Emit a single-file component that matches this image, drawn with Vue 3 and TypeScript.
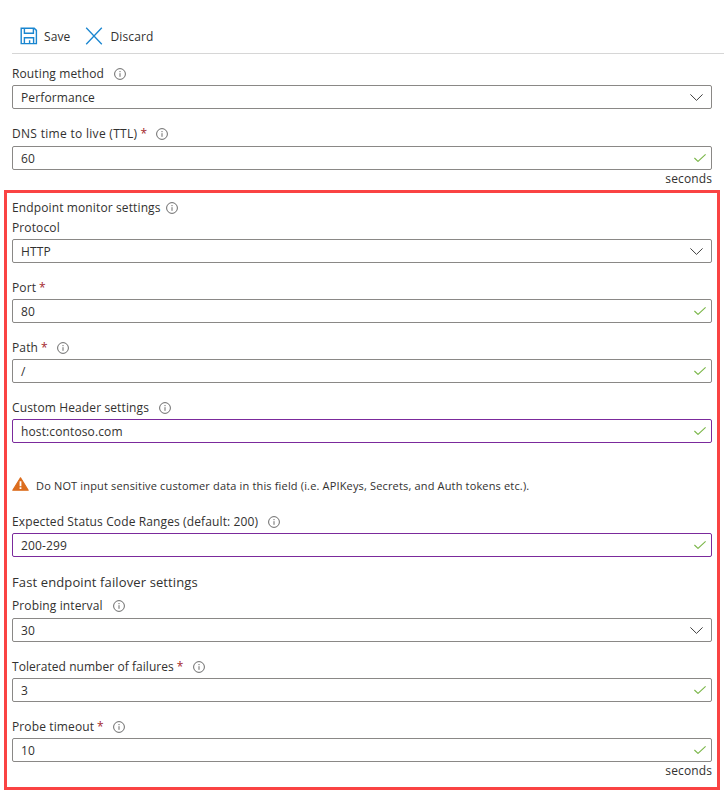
<script setup lang="ts">
type Field = {
  label: string
  value: string
  kind: 'select' | 'text'
  required?: boolean
  info?: boolean
  accent?: boolean
  suffix?: boolean
  labelClass?: string
}

const routing: Field[] = [
  { label: 'Routing method', value: 'Performance', kind: 'select', info: true },
  { label: 'DNS time to live (TTL)', value: '60', kind: 'text', required: true, info: true, suffix: true, labelClass: 'wide' },
]
const monitor: Field[] = [
  { label: 'Port', value: '80', kind: 'text', required: true },
  { label: 'Path', value: '/', kind: 'text', required: true, info: true },
  { label: 'Custom Header settings', value: 'host:contoso.com', kind: 'text', info: true, accent: true },
]
const failover: Field[] = [
  { label: 'Tolerated number of failures', value: '3', kind: 'text', required: true, info: true, labelClass: 'narrow' },
  { label: 'Probe timeout', value: '10', kind: 'text', required: true, info: true, suffix: true },
]
</script>

<template>
  <div class="page">
    <div class="toolbar">
      <button class="tool">
        <svg width="18" height="18" viewBox="0 0 18 18" fill="none" stroke="#1a86d0" stroke-width="1.4">
          <path d="M1.2 1.2h13l2.2 2.2v13.2H1.2z" />
          <path d="M4.4 1.4v4.8h9V1.4M4.4 16.4v-5.6h9.2v5.6M9.6 16.2v-3" />
        </svg>
        <span>Save</span>
      </button>
      <button class="tool">
        <svg width="18" height="18" viewBox="0 0 18 18" fill="none" stroke="#1a86d0" stroke-width="1.3">
          <path d="M1.2.8l15.6 16.4M16.8.8 1.2 17.2" />
        </svg>
        <span>Discard</span>
      </button>
    </div>

    <div class="rows">
      <div v-for="f in routing" :key="f.label" class="field">
        <div class="label" :class="f.labelClass">
          {{ f.label }}<span v-if="f.required" class="req"> *</span>
          <svg v-if="f.info" class="info" width="12" height="12" viewBox="0 0 12 12" fill="none" stroke="#6b6b6b"><circle cx="6" cy="6" r="5.4" /><path d="M6 5.2v3.6M6 3v1.2" /></svg>
        </div>
        <div class="input">
          <span>{{ f.value }}</span>
          <svg v-if="f.kind === 'select'" class="chev" width="13" height="7" viewBox="0 0 13 7" fill="none" stroke="#404040"><path d="M.4.4 6.5 6.4 12.6.4" /></svg>
          <svg v-else class="check" width="12" height="8" viewBox="0 0 12 8" fill="none" stroke="#7ab648" stroke-width="1.1"><path d="M.4 4 4 7.4 11.6.4" /></svg>
        </div>
        <div v-if="f.suffix" class="suffix">seconds</div>
      </div>
    </div>

    <section class="box">
      <div class="label tight">
        Endpoint monitor settings
        <svg class="info" width="12" height="12" viewBox="0 0 12 12" fill="none" stroke="#6b6b6b"><circle cx="6" cy="6" r="5.4" /><path d="M6 5.2v3.6M6 3v1.2" /></svg>
      </div>
      <div class="field first">
        <div class="label">Protocol</div>
        <div class="input">
          <span>HTTP</span>
          <svg class="chev" width="13" height="7" viewBox="0 0 13 7" fill="none" stroke="#404040"><path d="M.4.4 6.5 6.4 12.6.4" /></svg>
        </div>
      </div>

      <div v-for="f in monitor" :key="f.label" class="field">
        <div class="label">
          {{ f.label }}<span v-if="f.required" class="req"> *</span>
          <svg v-if="f.info" class="info" width="12" height="12" viewBox="0 0 12 12" fill="none" stroke="#6b6b6b"><circle cx="6" cy="6" r="5.4" /><path d="M6 5.2v3.6M6 3v1.2" /></svg>
        </div>
        <div class="input" :class="{ accent: f.accent }">
          <span>{{ f.value }}</span>
          <svg class="check" width="12" height="8" viewBox="0 0 12 8" fill="none" stroke="#7ab648" stroke-width="1.1"><path d="M.4 4 4 7.4 11.6.4" /></svg>
        </div>
      </div>

      <div class="warning">
        <svg class="warn-icon" width="17" height="14" viewBox="0 0 17 14"><path d="M8.5 .8 16.2 13.2H.8z" fill="#dc6d1e" stroke="#dc6d1e" stroke-width="1.2" stroke-linejoin="round" /><path d="M7.6 4.2h1.8v5H7.6zM7.6 10.2h1.8v1.8H7.6z" fill="#fff" /></svg>
        <span>Do NOT input sensitive customer data in this field (i.e. APIKeys, Secrets, and Auth tokens etc.).</span>
      </div>

      <div class="field status">
        <div class="label">
          Expected Status Code Ranges (default: 200)
          <svg class="info" width="12" height="12" viewBox="0 0 12 12" fill="none" stroke="#6b6b6b"><circle cx="6" cy="6" r="5.4" /><path d="M6 5.2v3.6M6 3v1.2" /></svg>
        </div>
        <div class="input accent">
          <span>200-299</span>
          <svg class="check" width="12" height="8" viewBox="0 0 12 8" fill="none" stroke="#7ab648" stroke-width="1.1"><path d="M.4 4 4 7.4 11.6.4" /></svg>
        </div>
      </div>

      <div class="label heading">Fast endpoint failover settings</div>
      <div class="field probing">
        <div class="label">
          Probing interval
          <svg class="info" width="12" height="12" viewBox="0 0 12 12" fill="none" stroke="#6b6b6b"><circle cx="6" cy="6" r="5.4" /><path d="M6 5.2v3.6M6 3v1.2" /></svg>
        </div>
        <div class="input">
          <span>30</span>
          <svg class="chev" width="13" height="7" viewBox="0 0 13 7" fill="none" stroke="#404040"><path d="M.4.4 6.5 6.4 12.6.4" /></svg>
        </div>
      </div>

      <div v-for="f in failover" :key="f.label" class="field">
        <div class="label" :class="f.labelClass">
          {{ f.label }}<span v-if="f.required" class="req"> *</span>
          <svg v-if="f.info" class="info" width="12" height="12" viewBox="0 0 12 12" fill="none" stroke="#6b6b6b"><circle cx="6" cy="6" r="5.4" /><path d="M6 5.2v3.6M6 3v1.2" /></svg>
        </div>
        <div class="input">
          <span>{{ f.value }}</span>
          <svg class="check" width="12" height="8" viewBox="0 0 12 8" fill="none" stroke="#7ab648" stroke-width="1.1"><path d="M.4 4 4 7.4 11.6.4" /></svg>
        </div>
        <div v-if="f.suffix" class="suffix">seconds</div>
      </div>
    </section>
  </div>
</template>

<style>
html, body { background: #fff; }
</style>

<style scoped>
.page {
  width: 724px;
  height: 804px;
  box-sizing: border-box;
  padding: 0 4px;
  font-family: "Open Sans", "Noto Sans", sans-serif;
  font-size: 12px;
  letter-spacing: .12px;
  color: #323130;
  overflow: hidden;
}
.toolbar {
  padding-top: 27px;
  height: 26px;
  margin: 0 -4px 0 8px;
  border-bottom: 1px solid #d6d6d6;
  display: flex;
  gap: 15px;
  align-items: flex-start;
}
.tool {
  display: flex;
  align-items: center;
  gap: 6px;
  height: 18px;
  margin-left: 8px;
  padding: 0;
  border: 0;
  background: none;
  font: inherit;
  letter-spacing: inherit;
  color: inherit;
}
.tool + .tool { margin-left: 0; gap: 7px; }
.rows { padding: 9px 8px 0; height: 127px; }
.label {
  height: 20px;
  box-sizing: border-box;
  padding-top: 2px;
  line-height: 18px;
  white-space: nowrap;
  display: flex;
  align-items: center;
}
.label.wide { letter-spacing: .3px; }
.label.narrow { letter-spacing: .05px; }
.req { color: #a4262c; margin-left: 3px; }
.info { margin-left: 10px; flex: none; }
.req + .info { margin-left: 9px; }
.label.tight .info { margin-left: 5px; }
.field { margin-top: 14px; }
.rows .field:first-child { margin-top: 0; }
.rows .field:last-child .input { margin-top: 3px; }
.field.first { margin-top: 0; }
.field.status { margin-top: 16px; }
.field.probing { margin-top: 3px; }
.field.probing .input { margin-top: 3px; }
.input {
  margin-top: 2px;
  height: 24px;
  box-sizing: border-box;
  border: 1px solid #8a8886;
  border-radius: 2px;
  padding: 0 4px 0 8px;
  display: flex;
  align-items: center;
  justify-content: space-between;
}
.input.accent { border-color: #7b2a9c; }
.chev { margin-right: 4px; }
.check { margin-right: 1px; }
.suffix { text-align: right; height: 18px; line-height: 18px; }
.box {
  border: 3px solid #fa4343;
  height: 600px;
  box-sizing: border-box;
  padding: 4px 5px 0;
}
.warning {
  margin-top: 32px;
  height: 20px;
  display: flex;
  align-items: center;
  gap: 7px;
  font-size: 11px;
  letter-spacing: .16px;
  white-space: nowrap;
}
.warn-icon { margin-bottom: 2px; }
.heading { margin-top: 15px; font-size: 13px; padding-top: 0; line-height: 20px; }
</style>
